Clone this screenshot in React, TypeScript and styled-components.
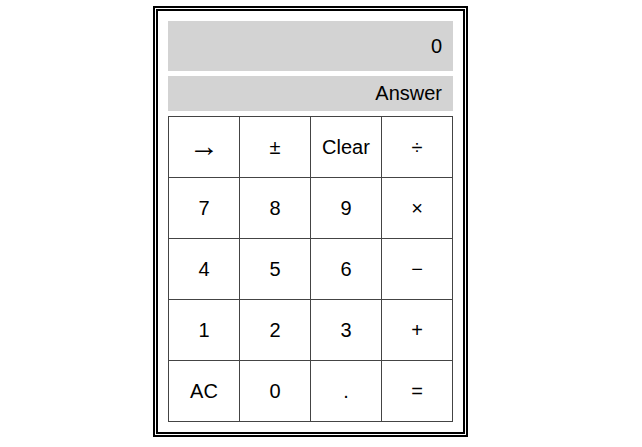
import React from 'react';
import styled, { createGlobalStyle } from 'styled-components';

const GlobalStyle = createGlobalStyle`
  body {
    margin: 0;
    background: #ffffff;
    font-family: 'Liberation Sans', Arial, sans-serif;
  }
`;

const Page = styled.div`
  padding: 6px 0 0 153px;
`;

const Calculator = styled.div`
  width: 285px;
  padding: 10px;
  border: 5px double #000;
  display: flex;
  flex-direction: column;
  gap: 5px;
`;

const Display = styled.div<{ $tall?: boolean }>`
  height: ${(p) => (p.$tall ? 50 : 35)}px;
  background: #d3d3d3;
  display: flex;
  align-items: center;
  justify-content: flex-end;
  padding-right: 11px;
  font-size: 20px;
  color: #000;
`;

const Keys = styled.table`
  border-collapse: collapse;
  width: 285px;
`;

const Key = styled.td`
  width: 70px;
  height: 60px;
  padding: 0;
  border: 1px solid #444;
  text-align: center;
  vertical-align: middle;
  font-size: 20px;
  line-height: 1;
  color: #000;
`;

// the arrow glyph is drawn wider in the original
const Arrow = styled.span`
  display: inline-block;
  font-size: 30px;
  line-height: 1;
  transform: translateY(-1px);
`;

const rows = [
  ['→', '±', 'Clear', '÷'],
  ['7', '8', '9', '×'],
  ['4', '5', '6', '−'],
  ['1', '2', '3', '+'],
  ['AC', '0', '.', '='],
];

export default function App() {
  return (
    <>
      <GlobalStyle />
      <Page>
        <Calculator>
          <Display $tall>0</Display>
          <Display>Answer</Display>
          <Keys>
            <tbody>
              {rows.map((row, i) => (
                <tr key={i}>
                  {row.map((k) => (
                    <Key key={k}>{k === '→' ? <Arrow>{k}</Arrow> : k}</Key>
                  ))}
                </tr>
              ))}
            </tbody>
          </Keys>
        </Calculator>
      </Page>
    </>
  );
}
